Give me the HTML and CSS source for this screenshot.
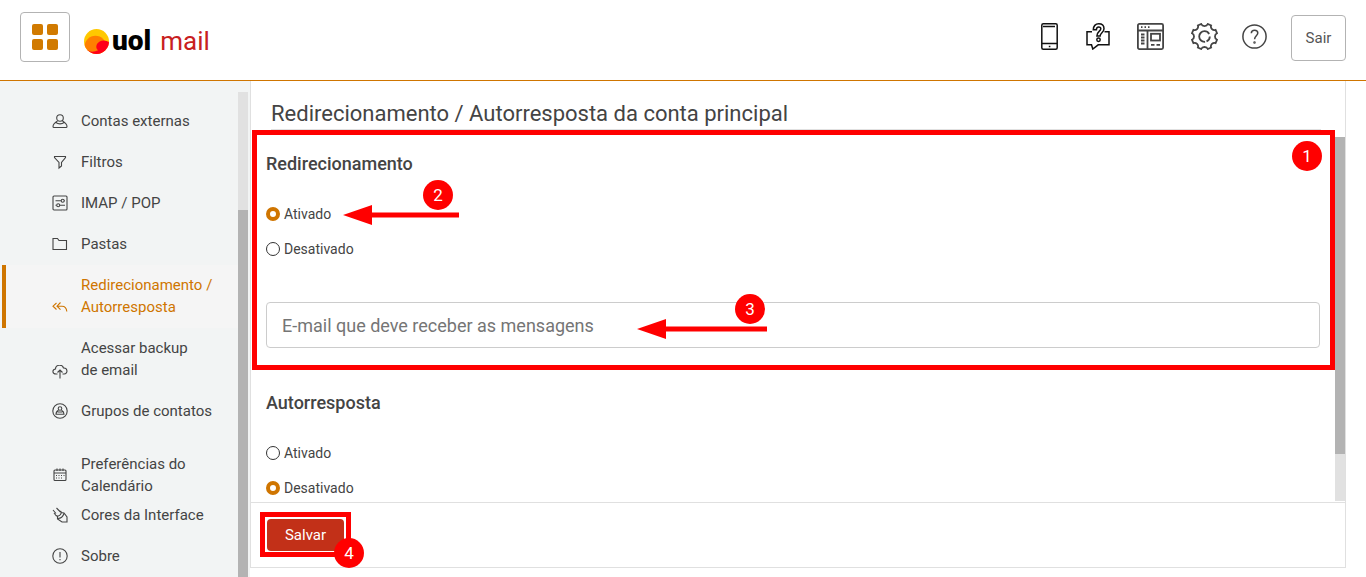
FILE: index.html
```html
<!DOCTYPE html>
<html lang="pt-BR">
<head>
    <meta charset="UTF-8">
    <meta name="viewport" content="width=device-width, initial-scale=1.0">
    <title>UOL Mail</title>
    <link rel="stylesheet" href="styles.css">
</head>
<body>
    <header class="topbar">
        <button class="apps" aria-label="Aplicativos">
            <span></span><span></span><span></span><span></span>
        </button>
        <a class="logo" href="#">
            <svg width="25" height="25" viewBox="0 0 24 24">
                <clipPath id="ball"><circle cx="12" cy="12" r="12"/></clipPath>
                <g clip-path="url(#ball)">
                    <rect width="24" height="24" fill="#ffc800"/>
                    <circle cx="11" cy="17" r="10.500" fill="#ff7f00"/>
                    <path d="M0 18C5 22.500 9 22.500 13.500 20.500C9.500 17 13 11 19 11C21 11 22.500 11.800 24 12.500V24H0Z" fill="#ff0019"/>
                </g>
            </svg>
            <span class="logo-uol">uol</span>
            <span class="logo-mail">mail</span>
        </a>
        <nav class="tools">
            <a href="#" aria-label="Celular">
                <svg width="18" height="27" viewBox="0 0 18 27" stroke="#111">
                    <rect x=".8" y=".8" width="15.400" height="25.400" rx="1.500"/>
                    <path d="M2 3.500h12M1 20.500h15M7.800 23.500h1.600"/>
                </svg>
            </a>
            <a href="#" aria-label="Dúvidas">
                <svg width="24" height="27" viewBox="0 0 24 27" stroke="#111">
                    <path d="M6 8.800H1v13h4.500l1.300 4.200 5.400-4.200H23v-13h-4.500"/>
                    <path d="M7.300 6.800C7.300 3 9.500.8 12.700.8s5.300 2 5.300 4.900c0 3.800-3.900 4.100-3.900 7.300h-3.200c0-4.600 3.900-4.900 3.900-7.300 0-1.200-.9-1.800-2.100-1.800-1.500 0-2.300 1-2.300 2.900z"/>
                    <circle cx="12.500" cy="16.800" r="1.700"/>
                </svg>
            </a>
            <a href="#" aria-label="Layout">
                <svg width="27" height="27" viewBox="0 0 27 27" stroke="#444" class="bold">
                    <rect x=".9" y=".9" width="25.200" height="25.200" rx="1.500"/>
                    <path d="M1 7.500h25M10.500 7.500V26M4 4.200h1.500M7.500 4.200H9M11 4.200h1.500M4 11.500h3.500M4 14.500h3.500M4 17.500h3.500M4 20.500h3.500M14 21.800h3.500M19.500 21.800h3.500"/>
                    <rect x="14" y="10.800" width="9" height="6.700"/>
                </svg>
            </a>
            <a href="#" aria-label="Configurações">
                <svg width="27" height="27" viewBox="0 0 27 27" stroke="#444" class="bold">
                    <path d="M10.200 1c1.200 2.700 5.400 2.700 6.600 0l3.300 1.400c-1 2.700 1.800 5.500 4.500 4.500L26 10.200c-2.700 1.200-2.700 5.400 0 6.600l-1.400 3.300c-2.700-1-5.500 1.800-4.500 4.500L16.800 26c-1.200-2.700-5.400-2.700-6.600 0l-3.300-1.400c1-2.700-1.800-5.500-4.500-4.500L1 16.800c2.700-1.200 2.700-5.400 0-6.600l1.400-3.300c2.700 1 5.500-1.800 4.500-4.500z"/>
                    <circle cx="13.500" cy="13.500" r="5.300" stroke-dasharray="6 1.500 22.300 3.500"/>
                </svg>
            </a>
            <a href="#" aria-label="Ajuda">
                <svg width="25" height="25" viewBox="0 0 25 25" stroke="#444">
                    <circle cx="12.500" cy="12.500" r="11.600"/>
                    <path d="M9.300 9.200c.1-2 1.400-3 3.300-3 1.800 0 3.200 1.200 3.200 2.900 0 2.700-3.200 2.800-3.200 6.100"/>
                    <circle cx="12.500" cy="18.500" r=".5"/>
                </svg>
            </a>
            <button class="sair">Sair</button>
        </nav>
    </header>

    <div class="page">
        <aside class="sidebar">
            <div class="menu">
                <ul>
                    <li><a href="#">
                        <svg width="16" height="16" viewBox="0 0 16 16"><circle cx="8" cy="5" r="3.300"/><path d="M5.500 8C3 9.500 1 11 1 13.500c0 .6.400 1 1 1h12c.6 0 1-.4 1-1C15 11 13 9.500 10.500 8M4 9.500c2 1.800 6 1.800 8 0"/></svg>
                        <span>Contas externas</span></a></li>
                    <li><a href="#">
                        <svg width="16" height="16" viewBox="0 0 16 16"><path d="M2.500 2.500h11v1l-4 5V12l-2.500 2V8.500l-4.500-5z"/></svg>
                        <span>Filtros</span></a></li>
                    <li><a href="#">
                        <svg width="16" height="16" viewBox="0 0 16 16"><rect x="1" y="1" width="14" height="14" rx="1"/><path d="M3.500 5.800H9M12.300 5.800h.7M3.500 10.300h1M8 10.300h5"/><circle cx="10.700" cy="5.800" r="1.500"/><circle cx="6.200" cy="10.300" r="1.500"/></svg>
                        <span>IMAP / POP</span></a></li>
                    <li><a href="#">
                        <svg width="16" height="16" viewBox="0 0 16 16"><path d="M1 13V2.500h4.500L7 4.500h7.500V13.500H1z"/></svg>
                        <span>Pastas</span></a></li>
                    <li class="active two-lines"><a href="#">
                        <svg width="16" height="16" viewBox="0 0 16 16"><path d="M4.500 1L1 4.200l3.500 3.300M8.500.5L5 4.200l3.500 3.500M5 4.200h5c3 0 4.500 2 4.800 5.300"/></svg>
                        <span>Redirecionamento / Autorresposta</span></a></li>
                    <li class="two-lines"><a href="#">
                        <svg width="16" height="16" viewBox="0 0 16 16"><path d="M5.500 9H4C0 9 0 4.500 3.500 4 3.500-.5 10.500-1 11.500 3c4-.3 5 5.500.5 6h-1.500M8 13.500V5M5.500 7.500L8 5l2.500 2.500"/></svg>
                        <span>Acessar backup de&nbsp;email</span></a></li>
                    <li><a href="#">
                        <svg width="16" height="16" viewBox="0 0 16 16"><circle cx="8" cy="8" r="7.200"/><circle cx="8" cy="5.500" r="1.800"/><path d="M6.500 7.300c-1.700.8-2.500 1.600-2.500 4h8c0-2.400-.8-3.200-2.500-4M5.500 9h5"/></svg>
                        <span>Grupos de contatos</span></a></li>
                </ul>
                <ul class="other">
                    <li class="compact"><a href="#">
                        <svg width="16" height="16" viewBox="0 0 16 16"><rect x="2" y="3" width="12" height="10.500" rx="1"/><path d="M2 6h12M5 1.500V4M8 1.500V4M11 1.500V4M4 8.500h1M6.500 8.500h1M9 8.500h1M11.500 8.500h1M4 11h1M6.500 11h1M9 11h1"/></svg>
                        <span>Preferências do Calendário</span></a></li>
                    <li><a href="#">
                        <svg width="16" height="16" viewBox="0 0 16 16"><path d="M1 3l3 3.500M4.500 1l4 4M2 6l2 2.500c1 1 3.500.5 4.500-1s1-2.500 0-3.500M9 5.500L12 6l3 4v5h-5L5.500 12V9M6 11.500c3 0 5-2 6-5"/></svg>
                        <span>Cores da Interface</span></a></li>
                    <li><a href="#">
                        <svg width="16" height="16" viewBox="0 0 16 16"><circle cx="8" cy="8" r="7.200"/><path d="M8 4v5.500M8 11v1.300"/></svg>
                        <span>Sobre</span></a></li>
                </ul>
            </div>
            <div class="scrollbar"><div class="thumb"></div></div>
        </aside>

        <main class="panel">
            <h1>Redirecionamento / Autorresposta da conta principal</h1>
            <div class="panel-body">
                <form class="content" id="redirect-form">
                    <section class="redirect">
                        <h2>Redirecionamento</h2>
                        <div class="option">
                            <label><input type="radio" name="redirect" checked> Ativado</label>
                            <div class="callout">
                                <svg class="arrow" width="116" height="20" viewBox="0 0 116 20"><path d="M0 10L29 0v7.500h87v5H29V20z"/></svg>
                                <span class="badge">2</span>
                            </div>
                        </div>
                        <div class="option">
                            <label><input type="radio" name="redirect"> Desativado</label>
                        </div>
                        <div class="field">
                            <input type="email" class="email" aria-label="E-mail" placeholder="E-mail que deve receber as mensagens">
                            <div class="callout">
                                <svg class="arrow" width="130" height="20" viewBox="0 0 130 20"><path d="M0 10L29 0v7.500h101v5H29V20z"/></svg>
                                <span class="badge">3</span>
                            </div>
                        </div>
                        <div class="frame"><span class="badge">1</span></div>
                    </section>
                    <section class="reply">
                        <h2>Autorresposta</h2>
                        <div class="option">
                            <label><input type="radio" name="reply"> Ativado</label>
                        </div>
                        <div class="option">
                            <label><input type="radio" name="reply" checked> Desativado</label>
                        </div>
                    </section>
                </form>
                <div class="scrollbar"><div class="thumb"></div></div>
            </div>
            <footer class="actions">
                <div class="save-mark">
                    <button class="save" type="submit" form="redirect-form">Salvar</button>
                    <span class="badge">4</span>
                </div>
            </footer>
        </main>
    </div>
</body>
</html>
```
FILE: styles.css
```css
* {
    box-sizing: border-box;
}
body {
    margin: 0;
    height: 100vh;
    display: flex;
    flex-direction: column;
    overflow: hidden;
    font-family: Roboto, "Liberation Sans", sans-serif;
    font-size: 15px;
    color: #444;
    background: #fff;
}
button, input {
    font-family: inherit;
}
a {
    color: inherit;
    text-decoration: none;
}
ul {
    list-style: none;
    margin: 0;
    padding: 0;
}
svg {
    display: block;
    flex: none;
    fill: none;
    stroke-width: 1.5;
}

/* header */
.topbar {
    display: flex;
    align-items: center;
    padding: 12px 20px 18px;
    border-bottom: 1px solid #cf7500;
}
.apps {
    display: grid;
    grid-template-columns: 11px 11px;
    gap: 4px;
    place-content: center;
    width: 50px;
    height: 50px;
    padding: 0;
    background: #fff;
    border: 1px solid #b3b3b3;
    border-radius: 4px;
}
.apps span {
    height: 11px;
    background: #d17a00;
    border-radius: 2px;
}
.logo {
    display: flex;
    align-items: center;
    margin-left: 14px;
    padding-top: 8px;
    line-height: 26px;
}
.logo svg {
    stroke: none;
}
.logo-uol {
    margin-left: 3px;
    font-size: 28px;
    font-weight: 900;
    color: #000;
}
.logo-mail {
    margin-left: 9px;
    font-size: 26px;
    font-weight: 400;
    color: #c8201e;
}
.tools {
    display: flex;
    align-items: center;
    gap: 24px;
    margin-left: auto;
}
.tools a {
    padding-bottom: 2px;
}
.tools a:nth-child(-n+3) {
    margin-right: 3px;
}
.tools .bold {
    stroke-width: 1.8;
}
.sair {
    width: 55px;
    height: 46px;
    margin-top: 2px;
    padding: 0;
    font-size: 15px;
    color: #555;
    background: #fff;
    border: 1px solid #b3b3b3;
    border-radius: 4px;
}

/* sidebar */
.page {
    flex: 1;
    display: flex;
    min-height: 0;
}
.sidebar {
    display: flex;
    width: 250px;
    flex: none;
    padding-right: 2px;
    background: #f2f4f4;
}
.menu {
    flex: 1;
    padding-top: 20px;
    overflow: hidden;
}
.menu li {
    margin-left: 2px;
    padding: 9px 20px 10px 46px;
    border-left: 4px solid transparent;
}
.menu a {
    display: flex;
    align-items: center;
    gap: 13px;
    line-height: 22px;
}
.menu svg {
    stroke: #444;
    stroke-width: 1.1;
}
.menu .two-lines a {
    align-items: flex-end;
}
.menu .active {
    color: #cf7500;
    background: #f5f5f5;
    border-color: #cf7500;
}
.menu .active svg {
    stroke: #cf7500;
}
.menu .other {
    margin-top: 12px;
}
.menu .compact {
    padding-bottom: 0;
    margin-bottom: -2px;
}
.scrollbar {
    width: 10px;
    flex: none;
    background: #e1e1e1;
}
.thumb {
    background: #b3b3b3;
}
.sidebar .scrollbar {
    margin-top: 11px;
    padding-top: 118px;
}
.sidebar .thumb {
    height: 100%;
}

/* main panel */
.panel {
    flex: 1;
    display: flex;
    flex-direction: column;
    min-width: 0;
    margin: 0 20px 9px 0;
    border: 1px solid #e0e0e0;
    border-top: none;
}
h1 {
    margin: 0 24px 0 20px;
    padding: 19px 0 1px;
    font-size: 22px;
    font-weight: 400;
    line-height: 28px;
    border-bottom: 1px solid #e0e0e0;
}
.panel-body {
    flex: 1;
    display: flex;
    min-height: 0;
    padding: 7px 0 1px;
}
.panel-body .thumb {
    height: 87%;
}
.content {
    flex: 1;
    padding: 0 15px;
}
.redirect {
    position: relative;
    padding: 15px 0 22px;
}
.reply {
    padding-top: 21px;
}
h2 {
    margin: 0 0 20px;
    font-size: 18px;
    font-weight: 500;
    line-height: 24px;
}
.option {
    display: flex;
    height: 35px;
    align-items: center;
    position: relative;
    font-size: 14px;
}
.option label {
    display: flex;
    align-items: center;
    gap: 4px;
}
.option input {
    appearance: none;
    width: 14px;
    height: 14px;
    margin: 0;
    background: #fff;
    border: 1px solid #333;
    border-radius: 50%;
}
.option input:checked {
    border: 4px solid #cf7500;
}
.field {
    position: relative;
    margin-top: 36px;
}
.email {
    display: block;
    width: 100%;
    height: 46px;
    padding: 0 15px;
    font-size: 18px;
    color: #444;
    border: 1px solid #ccc;
    border-radius: 4px;
}
.email::placeholder {
    color: #757575;
}
.actions {
    padding: 9px;
    border-top: 1px solid #e0e0e0;
}
.save-mark {
    position: relative;
    width: 91px;
    margin-bottom: 1px;
    padding: 2px;
    border: 5px solid #f00;
}
.save {
    display: block;
    width: 100%;
    height: 32px;
    margin-bottom: -1px;
    padding: 0;
    font-size: 15px;
    color: #fff;
    background: #c23018;
    border: none;
    border-radius: 4px;
}

/* numbered red marks */
.badge {
    position: absolute;
    width: 30px;
    height: 30px;
    border-radius: 50%;
    font-size: 17px;
    line-height: 30px;
    text-align: center;
    color: #fff;
    background: #f00;
}
.arrow {
    fill: #f00;
}
.callout {
    position: absolute;
    top: 9px;
    left: 77px;
}
.field .callout {
    top: 17px;
    left: 371px;
}
.callout .badge {
    right: 6px;
    bottom: 15px;
}
.field .callout .badge {
    right: 2px;
}
.frame {
    position: absolute;
    inset: -7px -15px 0 -14px;
    border: 5px solid #f00;
    pointer-events: none;
}
.frame .badge {
    top: 6px;
    right: 8px;
}
.save-mark .badge {
    right: -18px;
    bottom: -16px;
}
```
